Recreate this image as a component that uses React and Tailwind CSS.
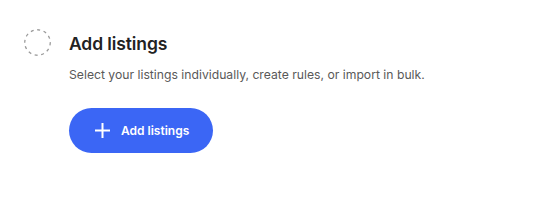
export default function App() {
  return (
    <div className="w-[545px] h-[218px] bg-white" style={{ fontFamily: 'Inter, "Noto Sans", sans-serif' }}>
      <div className="flex pt-[29px] pl-[24px]">
        <svg width="27" height="27" viewBox="0 0 27 27" className="shrink-0">
          <circle cx="13.5" cy="13.5" r="12.75" fill="none" stroke="#9a9a9a" strokeWidth="1.3" strokeDasharray="3 3.6" />
        </svg>
        <div className="ml-[18px] pt-[4px]">
          <h2 className="text-[17.5px] leading-[22px] font-semibold text-[#222222] tracking-[-0.1px]">Add listings</h2>
          <p className="mt-[11px] text-[12.2px] leading-[18px] text-[#595959]">Select your listings individually, create rules, or import in bulk.</p>
          <button className="mt-[24px] w-[144px] h-[45px] rounded-full bg-[#3b66f5] flex items-center pl-[25px] text-white">
            <svg width="17" height="17" viewBox="0 0 17 17" fill="none" stroke="white" strokeWidth="2">
              <path d="M8.5 1v15M1 8.5h15" />
            </svg>
            <span className="ml-[10px] text-[12px] font-semibold">Add listings</span>
          </button>
        </div>
      </div>
    </div>
  );
}
